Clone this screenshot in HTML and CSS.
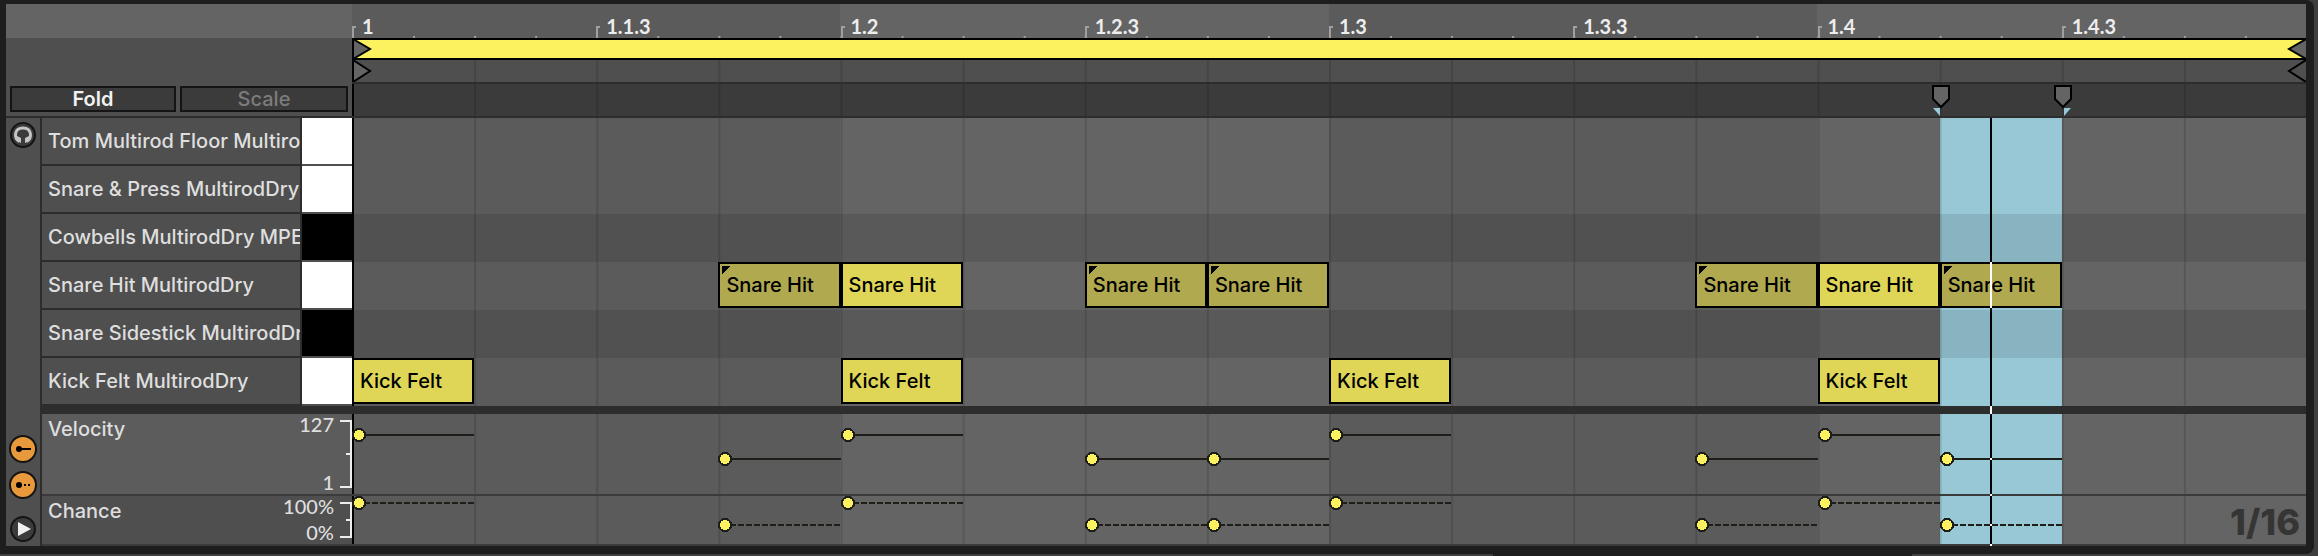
FILE: index.html
```
<!DOCTYPE html>
<html lang="en">
<head>
<meta charset="utf-8">
<title>Drum clip editor</title>
<link rel="stylesheet" href="styles.css">
</head>
<body>
<main class="frame">
  <div class="editor">

    <div class="corner">
      <div class="corner-top"></div>
      <div class="modes">
        <button class="mode on" type="button">Fold</button>
        <button class="mode" type="button">Scale</button>
      </div>
    </div>

    <div class="timeline">
      <div class="ruler">
        <span class="mark">1</span><span class="mark">1.1.3</span><span class="mark">1.2</span><span class="mark">1.2.3</span><span class="mark">1.3</span><span class="mark">1.3.3</span><span class="mark">1.4</span><span class="mark">1.4.3</span>
      </div>
      <div class="loop-bar">
        <svg class="flag" width="20" height="22" viewBox="0 0 20 22"><path d="M1 1L18 11L1 21Z"/></svg>
        <svg class="flag" width="20" height="22" viewBox="0 0 20 22"><path d="M20 1L3 11L20 21"/></svg>
      </div>
      <div class="clip-bar lines">
        <svg class="flag" width="20" height="22" viewBox="0 0 20 22"><path d="M1 0L18 11L1 22Z"/></svg>
        <svg class="flag hollow" width="20" height="22" viewBox="0 0 20 22"><path d="M20 0L3 11L20 22"/></svg>
      </div>
      <div class="marker-bar lines">
        <svg class="pin pin-start" width="20" height="34" viewBox="0 0 20 34"><path class="tip" d="M2 24H9V32Z"/><path class="shield" d="M2 2H18V15L10 23L2 15Z"/></svg>
        <svg class="pin pin-end" width="20" height="34" viewBox="0 0 20 34"><path class="tip" d="M11 24H18L11 32Z"/><path class="shield" d="M2 2H18V15L10 23L2 15Z"/></svg>
      </div>
    </div>

    <div class="tools">
      <button class="tool" type="button" aria-label="Preview">
        <svg width="28" height="28" viewBox="0 0 28 28"><circle class="dark" cx="14" cy="14" r="12"/><path class="phones" d="M10.500 20.500C4.500 17 5 7 14 7S23.500 17 17.500 20.500"/><path class="cups" d="M8 15L12 17V22L8 20ZM20 15L16 17V22L20 20Z"/></svg>
      </button>
      <div class="tool-group">
        <button class="tool" type="button" aria-label="Show velocity">
          <svg width="28" height="28" viewBox="0 0 28 28"><circle class="amber" cx="14" cy="14" r="13"/><circle cx="10" cy="14" r="3"/><path d="M10 13H22V15H10Z"/></svg>
        </button>
        <button class="tool" type="button" aria-label="Show chance">
          <svg width="28" height="28" viewBox="0 0 28 28"><circle class="amber" cx="14" cy="14" r="13"/><circle cx="10" cy="14" r="3"/><path d="M15 13H17V15H15ZM19 13H21V15H19Z"/></svg>
        </button>
        <button class="tool play" type="button" aria-label="Show lanes">
          <svg width="28" height="28" viewBox="0 0 28 28"><circle class="dark" cx="14" cy="14" r="12"/><path class="arrow" d="M9 7L22 14L9 21Z"/></svg>
        </button>
      </div>
    </div>

    <div class="keys">
      <div class="key"><span class="name">Tom Multirod Floor MultirodDry</span><span class="ivory"></span></div>
      <div class="key"><span class="name">Snare &amp; Press MultirodDry</span><span class="ivory"></span></div>
      <div class="key"><span class="name">Cowbells MultirodDry MPE</span><span class="ivory ebony"></span></div>
      <div class="key"><span class="name">Snare Hit MultirodDry</span><span class="ivory"></span></div>
      <div class="key"><span class="name">Snare Sidestick MultirodDry</span><span class="ivory ebony"></span></div>
      <div class="key"><span class="name">Kick Felt MultirodDry</span><span class="ivory"></span></div>
    </div>
    <div class="lane-head velocity">
      <span class="title">Velocity</span>
      <span class="range"><span>127</span><span>1</span></span>
      <span class="bracket"></span>
    </div>
    <div class="lane-head chance">
      <span class="title">Chance</span>
      <span class="range"><span>100%</span><span>0%</span></span>
      <span class="bracket"></span>
    </div>

    <div class="grid">
      <div class="row"></div>
      <div class="row"></div>
      <div class="row black"></div>
      <div class="row">
        <div class="note ghost c4">Snare Hit</div>
        <div class="note c5">Snare Hit</div>
        <div class="note ghost c7">Snare Hit</div>
        <div class="note ghost c8">Snare Hit</div>
        <div class="note ghost c12">Snare Hit</div>
        <div class="note c13">Snare Hit</div>
        <div class="note ghost c14">Snare Hit</div>
      </div>
      <div class="row black"></div>
      <div class="row">
        <div class="note c1">Kick Felt</div>
        <div class="note c5">Kick Felt</div>
        <div class="note c9">Kick Felt</div>
        <div class="note c13">Kick Felt</div>
      </div>
      <div class="divider"></div>
      <div class="lane velocity">
        <i class="stem high c1"></i><i class="stem c4"></i><i class="stem high c5"></i><i class="stem c7"></i><i class="stem c8"></i><i class="stem high c9"></i><i class="stem c12"></i><i class="stem high c13"></i><i class="stem c14"></i>
      </div>
      <div class="lane chance">
        <i class="stem high c1"></i><i class="stem c4"></i><i class="stem high c5"></i><i class="stem c7"></i><i class="stem c8"></i><i class="stem high c9"></i><i class="stem c12"></i><i class="stem high c13"></i><i class="stem c14"></i>
        <span class="resolution">1/16</span>
      </div>
      <div class="playhead"></div>
    </div>

  </div>
</main>
<footer class="dock"><div class="dock-tab"></div></footer>
</body>
</html>
```
FILE: styles.css
```
* { box-sizing: border-box; }

body {
  margin: 0;
  background: #3f3f3f;
  color: #dedede;
  font: 500 20px/24px Inter, "Liberation Sans", sans-serif;
}

button {
  margin: 0;
  padding: 0;
  border: 0;
  background: none;
  color: inherit;
  font: inherit;
}

svg { display: block; }

.frame {
  margin-right: 4px;
  padding: 4px 8px 8px 6px;
  background: #1e1e1e;
  border-radius: 0 8px 8px 0;
}

.editor {
  display: grid;
  grid-template-columns: 36px 310px 1fr;
  grid-template-rows: 114px 296px 82px 50px;
  background: #4f4f4f;
}

/* top left */
.corner {
  grid-column: 1 / 3;
  display: flex;
  flex-direction: column;
  border-bottom: 2px solid #2d2d2d;
}
.corner-top { height: 34px; background: #646464; }
.modes {
  display: grid;
  grid-template-columns: 166px 1fr;
  gap: 4px;
  margin: auto 4px 4px;
}
.mode {
  height: 26px;
  border: 2px solid #141414;
  background: #3b3b3b;
  color: #7c7c7c;
  line-height: 22px;
}
.mode.on { color: #f2f2f2; font-weight: 600; }

/* ruler and bars */
.timeline { display: flex; flex-direction: column; }
.ruler {
  height: 34px;
  display: grid;
  grid-template-columns: repeat(8, 1fr);
  background:
    linear-gradient(90deg, #a0a0a0 2px, transparent 2px) 0 100% / 3.125% 2px repeat-x,
    linear-gradient(90deg, #5b5b5b 50%, #646464 50%) 0 0 / 50% 100%;
}
.mark {
  padding: 10px 0 0 10px;
  font: 700 20px/24px Lato, "Liberation Sans", sans-serif;
  color: #ededed;
  background:
    linear-gradient(#a0a0a0, #a0a0a0) 0 22px / 4px 2px no-repeat,
    linear-gradient(#a0a0a0, #a0a0a0) 0 22px / 2px 12px no-repeat;
}
.loop-bar {
  height: 22px;
  display: flex;
  justify-content: space-between;
  border: solid #000;
  border-width: 2px 0;
  background: #fcf15f;
}
.loop-bar .flag { margin-top: -2px; }
.flag { fill: #646464; stroke: #000; stroke-width: 2px; }
.flag.hollow { fill: #4f4f4f; }
.clip-bar {
  height: 24px;
  display: flex;
  justify-content: space-between;
  border-bottom: 2px solid #2d2d2d;
  background-color: #4f4f4f;
}
.clip-bar, .marker-bar { box-shadow: inset 2px 0 #000; }
.marker-bar {
  position: relative;
  height: 34px;
  border-bottom: 2px solid #2d2d2d;
  background-color: #3b3b3b;
}
.lines {
  background-image: linear-gradient(90deg, rgba(0, 0, 0, .13) 2px, transparent 2px);
  background-size: 6.25% 100%;
}
.pin { position: absolute; top: 0; margin-left: -9px; }
.pin-start { left: 81.25%; }
.pin-end { left: 87.5%; }
.shield { fill: #646464; stroke: #000; stroke-width: 2px; }
.tip { fill: #98c8d6; }

/* left tools */
.tools {
  grid-row: 2 / 5;
  display: flex;
  flex-direction: column;
  align-items: center;
  justify-content: space-between;
  padding: 3px 0;
  border-right: 2px solid #2d2d2d;
}
.tool-group { display: flex; flex-direction: column; gap: 8px; }
.play { margin-top: 8px; }
.dark { fill: #3b3b3b; stroke: #141414; stroke-width: 2px; }
.amber { fill: #e8993c; stroke: #141414; stroke-width: 2px; }
.phones { fill: none; stroke: #c4c4c4; stroke-width: 3px; }
.cups { fill: #c4c4c4; }
.arrow { fill: #f0f0f0; }

/* row names and piano keys */
.keys { grid-column: 2; border-bottom: 8px solid #2d2d2d; }
.key { height: 48px; display: grid; grid-template-columns: 1fr 50px; }
.name {
  overflow: hidden;
  padding-left: 6px;
  border: solid #2d2d2d;
  border-width: 0 2px 2px 0;
  line-height: 46px;
  white-space: nowrap;
}
.ivory { background: #fff; border-bottom: 2px solid #4f4f4f; }
.ebony { background: #000; }

/* lane headers */
.lane-head {
  grid-column: 2;
  display: grid;
  grid-template-columns: 1fr auto 12px;
  column-gap: 6px;
  padding-left: 6px;
  border-bottom: 2px solid #3b3b3b;
}
.lane-head.velocity { background: #5c5c5c; }
.title { padding-top: 3px; }
.range {
  display: flex;
  flex-direction: column;
  justify-content: space-between;
  text-align: right;
  font-family: Lato, "Liberation Sans", sans-serif;
}
.velocity .range { margin-top: -2px; }
.chance .range { margin: -2px 0 0; }
.bracket {
  margin: 6px 0;
  border: 2px solid #ececec;
  border-left: 0;
  background: linear-gradient(#ececec, #ececec) 100% 50% / 4px 2px no-repeat;
}

/* note grid */
.grid {
  grid-column: 3;
  grid-row: 2 / 5;
  position: relative;
  background:
    linear-gradient(90deg, #000 2px, transparent 2px) no-repeat,
    linear-gradient(90deg, rgba(0, 0, 0, .13) 2px, transparent 2px) 0 0 / 6.25% 100%,
    linear-gradient(90deg, transparent 81.25%, #98c8d6 81.25% 87.5%, transparent 87.5%),
    linear-gradient(90deg, #5b5b5b 50%, #646464 50%) 0 0 / 50% 100%;
}
.row, .lane { display: grid; grid-template-columns: repeat(16, minmax(0, 1fr)); }
.row { height: 48px; padding-bottom: 2px; }
.black { background: rgba(0, 0, 0, .1); }
.note {
  grid-row: 1;
  overflow: hidden;
  padding-left: 6px;
  border: 2px solid #000;
  background: #dfd658;
  color: #000;
  line-height: 42px;
  white-space: nowrap;
}
.ghost {
  background: linear-gradient(135deg, #000 6px, transparent 6px) 2px 2px / 8px 8px no-repeat, #b0a950;
}
.c1 { grid-column: 1; }
.c4 { grid-column: 4; }
.c5 { grid-column: 5; }
.c7 { grid-column: 7; }
.c8 { grid-column: 8; }
.c9 { grid-column: 9; }
.c12 { grid-column: 12; }
.c13 { grid-column: 13; }
.c14 { grid-column: 14; }
.divider { height: 8px; background: #2d2d2d; }

/* velocity and chance lanes */
.lane { position: relative; border-bottom: 2px solid #3b3b3b; }
.lane.velocity { height: 82px; }
.lane.chance { height: 50px; }
.stem {
  grid-row: 1;
  height: 14px;
  background:
    radial-gradient(circle at 7px 7px, #fcf15f 5px, #1e1e18 5px 7px, transparent 7px) no-repeat,
    linear-gradient(#1e1e18, #1e1e18) 12px 6px / 100% 2px no-repeat;
}
.velocity .stem { margin-top: 38px; }
.velocity .high { margin-top: 14px; }
.chance .stem {
  margin-top: 22px;
  background:
    radial-gradient(circle at 7px 7px, #fcf15f 5px, #1e1e18 5px 7px, transparent 7px) no-repeat,
    linear-gradient(90deg, #1e1e18 6px, transparent 6px) 4px 6px / 8px 2px repeat-x;
}
.chance .high { margin-top: 0; }
.resolution {
  position: absolute;
  right: 6px;
  bottom: 2px;
  font-size: 36px;
  font-weight: 800;
  line-height: 40px;
  color: #353535;
}

.playhead {
  position: absolute;
  top: 0;
  bottom: 0;
  left: 83.83%;
  width: 2px;
  background: linear-gradient(
    #000 144px, #fff 144px 190px, #000 190px 288px, #fff 288px 296px,
    #000 296px 340px, #fff 340px 342px, #000 342px 376px, #fff 376px 378px,
    #000 378px 406px, #fff 406px 408px, #000 408px 426px, #fff 426px);
}

/* panel edge below */
.dock { height: 2px; }
.dock-tab { height: 2px; margin: 0 17.5% 0 64.4%; background: #1e1e1e; }
```
